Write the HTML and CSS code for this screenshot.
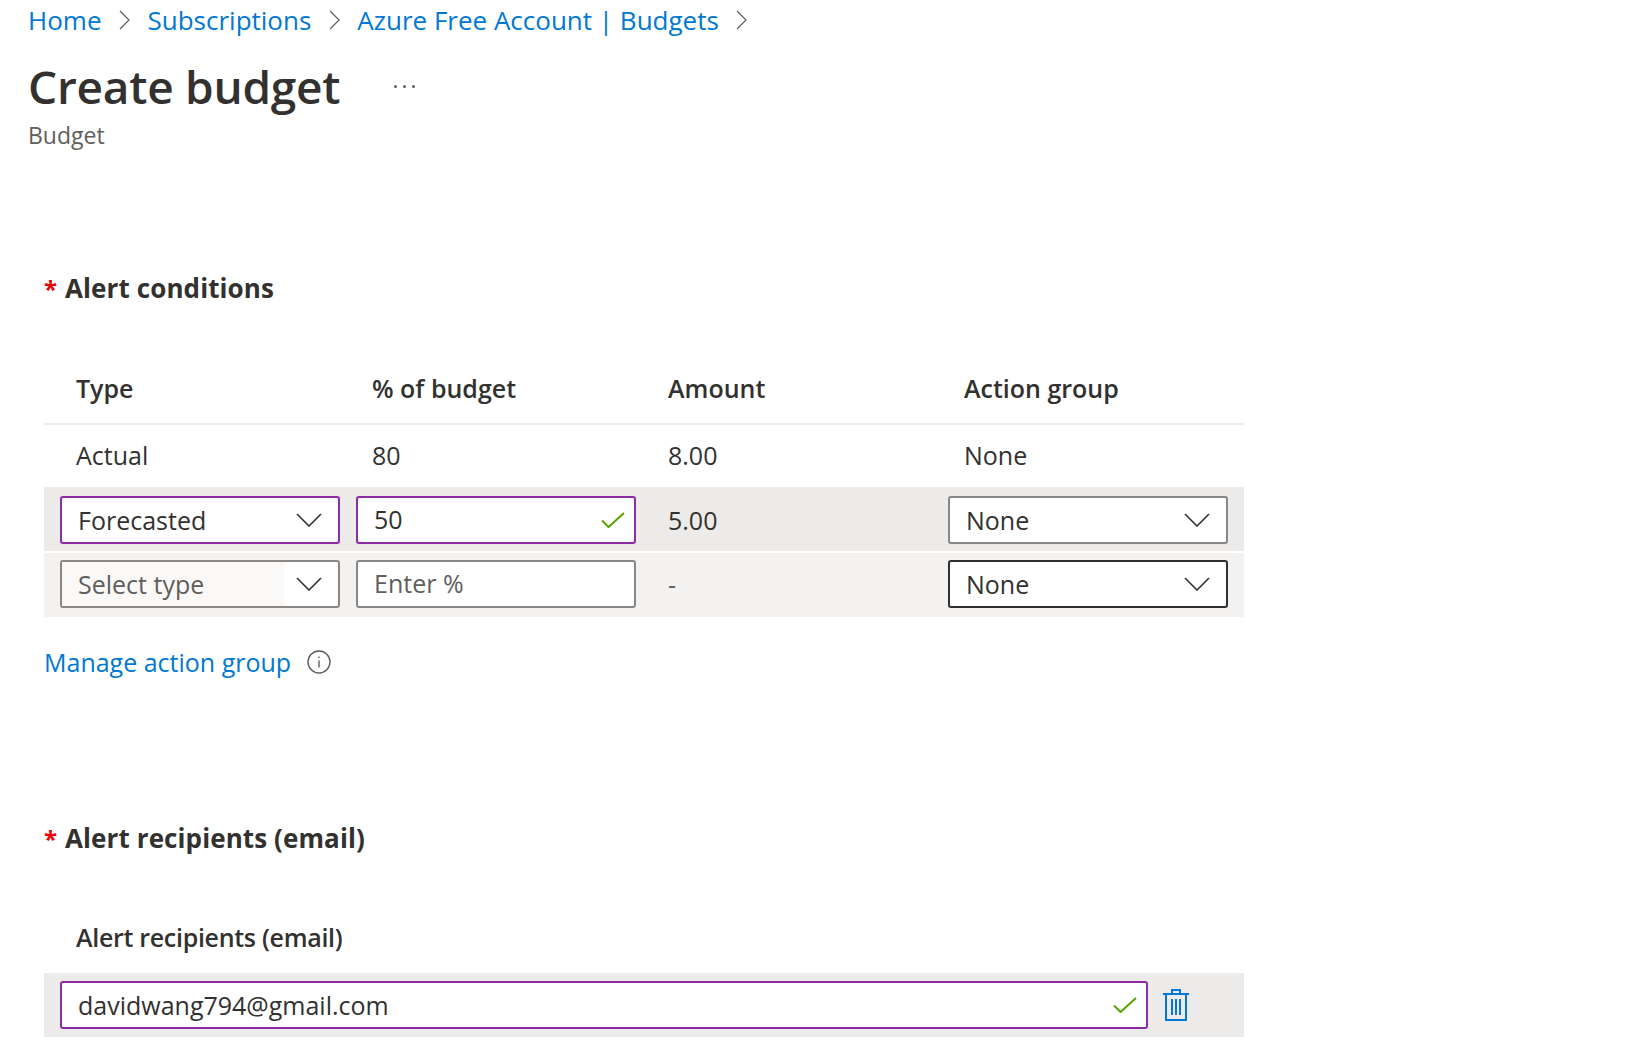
FILE: index.html
```html
<!DOCTYPE html>
<html lang="en">
<head>
    <meta charset="UTF-8">
    <title>Create budget</title>
    <link rel="stylesheet" href="styles.css">
</head>
<body>
    <nav class="breadcrumb">
        <a href="#">Home</a>
        <svg class="crumb-sep" viewBox="0 0 11 20"><path d="M1 1l9 9-9 9"/></svg>
        <a href="#">Subscriptions</a>
        <svg class="crumb-sep" viewBox="0 0 11 20"><path d="M1 1l9 9-9 9"/></svg>
        <a href="#">Azure Free Account | Budgets</a>
        <svg class="crumb-sep" viewBox="0 0 11 20"><path d="M1 1l9 9-9 9"/></svg>
    </nav>

    <header class="page-header">
        <div class="title-row">
            <h1>Create budget</h1>
            <span class="more"><i></i><i></i><i></i></span>
        </div>
        <div class="subtitle">Budget</div>
    </header>

    <section class="conditions">
        <h2><span class="req">*</span> Alert conditions</h2>
        <div class="table">
            <div class="row head">
                <div class="cell">Type</div>
                <div class="cell">% of budget</div>
                <div class="cell">Amount</div>
                <div class="cell">Action group</div>
            </div>
            <div class="row plain">
                <div class="cell">Actual</div>
                <div class="cell">80</div>
                <div class="cell">8.00</div>
                <div class="cell">None</div>
            </div>
            <div class="row active">
                <div class="box valid">
                    <span>Forecasted</span>
                    <svg class="chev" viewBox="0 0 26 14"><path d="M1 1l12 12L25 1"/></svg>
                </div>
                <div class="box valid">
                    <span class="typed">50</span>
                    <svg class="check" viewBox="0 0 24 16"><path d="M1 8.500l6.500 6.500L23 1"/></svg>
                </div>
                <div class="cell">5.00</div>
                <div class="box">
                    <span>None</span>
                    <svg class="chev" viewBox="0 0 26 14"><path d="M1 1l12 12L25 1"/></svg>
                </div>
            </div>
            <div class="row next">
                <div class="box empty">
                    <span class="fill">Select type</span>
                    <svg class="chev" viewBox="0 0 26 14"><path d="M1 1l12 12L25 1"/></svg>
                </div>
                <div class="box">
                    <span class="typed hint">Enter %</span>
                </div>
                <div class="cell hint">-</div>
                <div class="box dark">
                    <span>None</span>
                    <svg class="chev" viewBox="0 0 26 14"><path d="M1 1l12 12L25 1"/></svg>
                </div>
            </div>
        </div>
        <div class="manage">
            <a href="#">Manage action group</a>
            <svg class="info" viewBox="0 0 24 24"><circle cx="12" cy="12" r="11"/><path d="M12 10.500v7M12 6.500v1.500"/></svg>
        </div>
    </section>

    <section class="recipients">
        <h2><span class="req">*</span> Alert recipients (email)</h2>
        <div class="table">
            <div class="sub-label">Alert recipients (email)</div>
            <div class="row-email">
                <div class="box valid email">
                    <span>davidwang794@gmail.com</span>
                    <svg class="check" viewBox="0 0 24 16"><path d="M1 8.500l6.500 6.500L23 1"/></svg>
                </div>
                <svg class="trash" viewBox="0 0 26 32">
                    <path d="M0 5h26M9 5V1h8v4M3 5v26h20V5M9 10v16M13 10v16M17 10v16"/>
                </svg>
            </div>
        </div>
    </section>
</body>
</html>
```

FILE: styles.css
```css
body {
    margin: 0;
    background: #fff;
    color: #323130;
    font-family: "Open Sans", "Noto Sans", sans-serif;
    font-size: 25px;
    overflow: hidden;
}

a {
    color: #0078d4;
    text-decoration: none;
}

.breadcrumb {
    display: flex;
    align-items: center;
    gap: 17.5px;
    height: 42px;
    padding-bottom: 2px;
    padding-left: 28px;
    font-size: 26px;
    line-height: 38px;
    box-sizing: border-box;
}

.crumb-sep {
    width: 11px;
    height: 20px;
    fill: none;
    stroke: #605e5c;
    stroke-width: 1.2;
}

.page-header {
    padding-left: 28px;
}

.title-row {
    display: flex;
    align-items: center;
    height: 88px;
}

h1 {
    margin: 0;
    font-size: 46px;
    font-weight: 600;
    letter-spacing: -0.25px;
}

.more {
    display: flex;
    gap: 6px;
    margin-left: 54px;
}

.more i {
    width: 3px;
    height: 3px;
    border-radius: 50%;
    background: #605e5c;
}

.subtitle {
    height: 32px;
    margin-top: -7px;
    line-height: 24px;
    color: #605e5c;
    font-size: 23px;
}

h2 {
    margin: 0;
    font-size: 26px;
    font-weight: 700;
    line-height: 36px;
    letter-spacing: 0.1px;
}

.req {
    color: #e00;
    font-size: 24px;
    margin-right: 1px;
}

.conditions {
    padding: 115px 0 0 44px;
}

.conditions h2 {
    margin-bottom: 50px;
}

.table {
    width: 1200px;
}

.row {
    display: grid;
    grid-template-columns: repeat(4, 296px);
    align-items: center;
}

.cell {
    padding-left: 32px;
}

.head {
    height: 68px;
    padding-bottom: 4px;
    border-bottom: 2px solid #edebe9;
    box-sizing: border-box;
    font-weight: 600;
}

.plain {
    height: 62px;
    padding-bottom: 3px;
    box-sizing: border-box;
}

.active {
    height: 64px;
    padding-top: 2px;
    box-sizing: border-box;
    background: #edebe9;
    margin-bottom: 2px;
}

.next {
    height: 64px;
    padding-bottom: 2px;
    box-sizing: border-box;
    background: #f3f2f1;
}

.box {
    display: flex;
    align-items: center;
    justify-content: space-between;
    box-sizing: border-box;
    width: 280px;
    height: 48px;
    margin-left: 16px;
    padding: 0 16px;
    background: #fff;
    border: 2px solid #8a8886;
    border-radius: 3px;
}

.box.valid {
    border-color: #8a2da5;
}

.box.dark {
    border-color: #323130;
}

.box.empty {
    padding: 0 16px 0 0;
}

.fill {
    align-self: stretch;
    display: flex;
    align-items: center;
    flex: 0 0 222px;
    box-sizing: border-box;
    padding-left: 16px;
    background: #faf9f8;
    color: #605e5c;
}

.typed {
    position: relative;
    top: -1px;
}

.hint {
    color: #605e5c;
}

.chev {
    width: 26px;
    height: 14px;
    fill: none;
    stroke: #323130;
    stroke-width: 1.6;
}

.check {
    width: 24px;
    height: 16px;
    margin-right: -7px;
    fill: none;
    stroke: #57a300;
    stroke-width: 2;
}

.manage {
    display: flex;
    align-items: center;
    gap: 16px;
    height: 48px;
    margin-top: 21px;
}

.info {
    width: 24px;
    height: 24px;
    fill: none;
    stroke: #605e5c;
    stroke-width: 1.4;
}

.recipients {
    padding: 134px 0 0 44px;
}

.recipients h2 {
    margin-bottom: 60px;
}

.sub-label {
    height: 56px;
    padding-left: 32px;
    line-height: 40px;
    font-weight: 600;
    letter-spacing: -0.3px;
}

.row-email {
    display: flex;
    align-items: center;
    height: 64px;
    background: #edebe9;
}

.box.email {
    width: 1088px;
}

.trash {
    width: 26px;
    height: 32px;
    margin-left: 15px;
    fill: none;
    stroke: #0078d4;
    stroke-width: 2;
}
```
